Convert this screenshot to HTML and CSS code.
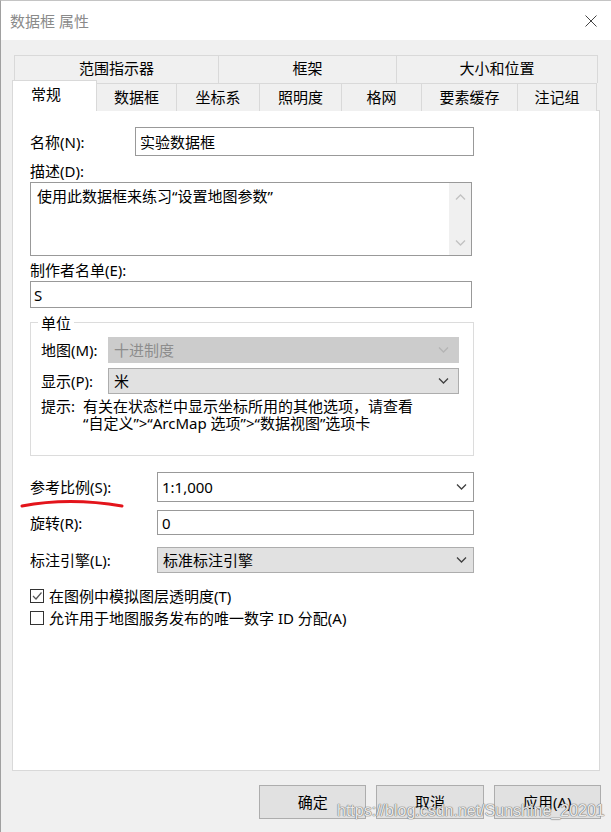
FILE: index.html
```html
<!DOCTYPE html>
<html lang="zh-CN">
<head>
<meta charset="utf-8">
<title>数据框 属性</title>
<link rel="stylesheet" href="styles.css">
</head>
<body>
<div class="window">
  <div class="titlebar">
    <span class="title">数据框 属性</span>
    <svg class="close" width="12" height="12" viewBox="0 0 12 12"><path d="M0.5 0.5 L11.5 11.5 M11.5 0.5 L0.5 11.5" stroke="#444" stroke-width="1" fill="none"/></svg>
  </div>
  <div class="body">
    <div class="tabs">
      <div class="tabrow row1">
        <div class="tab">范围指示器</div>
        <div class="tab">框架</div>
        <div class="tab">大小和位置</div>
      </div>
      <div class="tabrow row2">
        <div class="tab active">常规</div>
        <div class="tab">数据框</div>
        <div class="tab">坐标系</div>
        <div class="tab">照明度</div>
        <div class="tab">格网</div>
        <div class="tab">要素缓存</div>
        <div class="tab">注记组</div>
      </div>
    </div>
    <div class="panel">
      <div class="row name-row">
        <label class="lbl-w">名称(N):</label>
        <div class="input name-input">实验数据框</div>
      </div>
      <div class="lbl desc-lbl">描述(D):</div>
      <div class="textarea">
        <div class="ta-text">使用此数据框来练习“设置地图参数”</div>
        <div class="scrollbar">
          <svg width="11" height="6" viewBox="0 0 11 6"><polyline points="1,5.5 5.5,1 10,5.5" fill="none" stroke="#c2c2c2" stroke-width="1.3"/></svg>
          <svg width="11" height="6" viewBox="0 0 11 6"><polyline points="1,0.5 5.5,5 10,0.5" fill="none" stroke="#c2c2c2" stroke-width="1.3"/></svg>
        </div>
      </div>
      <div class="lbl author-lbl">制作者名单(E):</div>
      <div class="input author-input">S</div>

      <div class="group">
        <div class="legend">单位</div>
        <div class="grow map-row">
          <span class="glbl">地图(M):</span>
          <div class="select disabled">
            <span>十进制度</span>
            <svg width="11" height="6" viewBox="0 0 11 6"><polyline points="1,0.5 5.5,5 10,0.5" fill="none" stroke="#b4b4b4" stroke-width="1.3"/></svg>
          </div>
        </div>
        <div class="grow disp-row">
          <span class="glbl">显示(P):</span>
          <div class="select">
            <span>米</span>
            <svg width="11" height="6" viewBox="0 0 11 6"><polyline points="1,0.5 5.5,5 10,0.5" fill="none" stroke="#404040" stroke-width="1.3"/></svg>
          </div>
        </div>
        <div class="hint">
          <span class="hint-lbl">提示:</span>
          <span class="hint-text">有关在状态栏中显示坐标所用的其他选项，请查看<br>“自定义”&gt;“ArcMap 选项”&gt;“数据视图”选项卡</span>
        </div>
      </div>

      <div class="row scale-row">
        <label class="lbl-w2">参考比例(S):</label>
        <div class="combo">
          <span>1:1,000</span>
          <svg width="11" height="6" viewBox="0 0 11 6"><polyline points="1,0.5 5.5,5 10,0.5" fill="none" stroke="#404040" stroke-width="1.3"/></svg>
        </div>
      </div>
      <div class="row rot-row">
        <label class="lbl-w2">旋转(R):</label>
        <div class="input rot-input">0</div>
      </div>
      <div class="row eng-row">
        <label class="lbl-w2">标注引擎(L):</label>
        <div class="select eng-select">
          <span>标准标注引擎</span>
          <svg width="11" height="6" viewBox="0 0 11 6"><polyline points="1,0.5 5.5,5 10,0.5" fill="none" stroke="#404040" stroke-width="1.3"/></svg>
        </div>
      </div>
      <div class="check-row first">
        <span class="box"><svg width="12" height="12" viewBox="0 0 12 12"><polyline points="2,6 5,9 10.5,2.5" fill="none" stroke="#555" stroke-width="1.2"/></svg></span>
        <span>在图例中模拟图层透明度(T)</span>
      </div>
      <div class="check-row">
        <span class="box"></span>
        <span>允许用于地图服务发布的唯一数字 ID 分配(A)</span>
      </div>
    </div>
    <div class="buttons">
      <div class="btn">确定</div>
      <div class="btn">取消</div>
      <div class="btn">应用(A)</div>
    </div>
  </div>
  <svg class="redline" width="110" height="16" viewBox="0 0 110 16"><path d="M3 10 Q 50 1 103 10" fill="none" stroke="#e3141b" stroke-width="3" stroke-linecap="round"/></svg>
  <div class="watermark">https://blog.csdn.net/Sunshine_20201</div>
</div>
</body>
</html>
```
FILE: styles.css
```css
* { box-sizing: border-box; }
html, body { margin: 0; padding: 0; }
body {
  width: 611px;
  height: 832px;
  overflow: hidden;
  background: #f0f0f0;
  font-family: "Noto Sans", "Noto Sans CJK SC", sans-serif;
  font-size: 15px;
  color: #000;
}
.window {
  position: relative;
  height: 832px;
  border-left: 1px solid #a0a0a0;
  border-top: 1px solid #c4c4c4;
}
.titlebar {
  height: 39px;
  background: #fff;
  display: flex;
  align-items: center;
  padding-left: 9px;
}
.title { color: #8a8a8a; font-size: 15px; line-height: 20px; }
.close { margin-left: auto; margin-right: 14px; }

.body { padding: 0 10px 0 11px; }
.tabs { margin-top: 15px; }
.tabrow { display: grid; }
.row1 {
  margin-left: 2px;
  grid-template-columns: 204px 178px 201px;
  height: 28px;
  border-left: 1px solid #d9d9d9;
  width: 583px;
}
.row2 {
  grid-template-columns: 85px 80px 83px 82px 80px 96px 79px;
  height: 27px;
  width: 585px;
}
.tab {
  border-top: 1px solid #d9d9d9;
  border-right: 1px solid #d9d9d9;
  background: #f0f0f0;
  text-align: center;
  line-height: 25px;
  white-space: nowrap;
}
.row2 .tab { line-height: 26px; }
.row2 .tab.active {
  position: relative;
  z-index: 1;
  background: #fff;
  border-left: 1px solid #d9d9d9;
  margin-top: -3px;
  height: 31px;
  text-align: left;
  padding-left: 18px;
  line-height: 26px;
}

.panel {
  width: 588px;
  height: 661px;
  background: #fff;
  border: 1px solid #d9d9d9;
  padding: 16px 0 0 17px;
}
.row { display: flex; align-items: center; }
.lbl-w { width: 105px; line-height: 20px; }
.lbl-w2 { width: 127px; line-height: 20px; }
.input {
  border: 1px solid #999;
  background: #fff;
  padding-left: 4px;
  display: flex;
  align-items: center;
  line-height: 20px;
}
.name-input { width: 339px; height: 29px; }
.lbl { line-height: 20px; }
.desc-lbl { margin-top: 5px; }
.textarea {
  margin-top: 1px;
  width: 442px;
  height: 74px;
  border: 1px solid #999;
  display: flex;
}
.ta-text { flex: 1; padding: 3px 0 0 6px; line-height: 20px; }
.scrollbar {
  width: 22px;
  background: #f0f0f0;
  display: flex;
  flex-direction: column;
  align-items: center;
  justify-content: space-between;
  padding: 11px 0 9px;
}
.author-lbl { margin-top: 4px; }
.author-input { margin-top: 1px; width: 442px; height: 27px; padding-left: 3px; }

.group {
  margin-top: 14px;
  width: 444px;
  height: 134px;
  border: 1px solid #dcdcdc;
  padding-left: 10px;
}
.legend {
  width: fit-content;
  margin: -10px 0 0 -3px;
  padding: 0 3px;
  background: #fff;
  line-height: 20px;
}
.grow { display: flex; align-items: center; }
.glbl { width: 67px; line-height: 20px; }
.map-row { margin-top: 4px; }
.disp-row { margin-top: 5px; }
.select {
  width: 351px;
  height: 26px;
  background: #e1e1e1;
  border: 1px solid #adadad;
  display: flex;
  align-items: center;
  justify-content: space-between;
  padding: 0 9px 0 5px;
  line-height: 20px;
}
.select.disabled {
  background: #cccccc;
  border-color: #cccccc;
  color: #8d8d8d;
}
.hint { display: flex; margin-top: 4px; line-height: 17px; white-space: nowrap; }
.hint-lbl { width: 42px; }
.hint-text { display: block; }

.scale-row { margin-top: 16px; }
.combo {
  width: 317px;
  height: 30px;
  border: 1px solid #999;
  display: flex;
  align-items: center;
  justify-content: space-between;
  padding: 0 6px 0 4px;
  line-height: 20px;
}
.rot-row { margin-top: 8px; }
.rot-input { width: 317px; height: 25px; }
.eng-row { margin-top: 12px; }
.eng-select { width: 317px; padding-right: 6px; }

.check-row {
  display: flex;
  align-items: center;
  height: 22px;
  line-height: 20px;
}
.check-row.first { margin-top: 12px; }
.box {
  width: 14px;
  height: 14px;
  border: 1px solid #333;
  margin-right: 5px;
  display: flex;
  align-items: center;
  justify-content: center;
}

.buttons {
  display: flex;
  gap: 10px;
  margin-top: 14px;
  padding-left: 247px;
}
.btn {
  width: 108px;
  height: 34px;
  background: #e1e1e1;
  border: 1px solid #adadad;
  display: flex;
  align-items: center;
  justify-content: center;
  line-height: 20px;
}

.redline { position: absolute; left: 18px; top: 495px; }
.watermark {
  position: absolute;
  left: 336px;
  top: 801px;
  font-family: "Liberation Sans", sans-serif;
  font-size: 16px;
  color: rgba(250, 250, 250, 0.9);
  text-shadow: 0 0 1px #707070, 0 0 1px #707070, 0 0 1px #808080;
  white-space: nowrap;
}
```
